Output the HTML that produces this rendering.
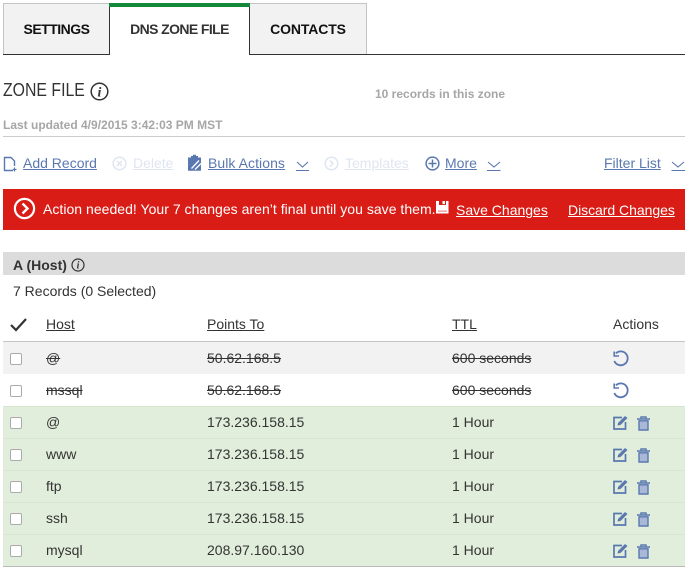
<!DOCTYPE html>
<html><head><meta charset="utf-8"><style>
html,body{margin:0;padding:0;background:#fff}
body{width:689px;height:570px;position:relative;overflow:hidden;font-family:"Liberation Sans",sans-serif;font-size:14px;color:#333}
.a{position:absolute;white-space:nowrap;line-height:16px}
.b{position:absolute}
.l{color:#5a78b0;text-decoration:underline}
.d{color:#dfe5f1;text-decoration:underline}
.tab{position:absolute;top:3px;height:50px;background:#f2f2f2;border:1px solid #c4c4c4;border-bottom:none;box-sizing:content-box;text-align:center;font-weight:bold;color:#111;line-height:50px;font-size:14px}
.w{color:#fff;text-decoration:underline}
.s{text-decoration:line-through}
.cb{position:absolute;left:10px;width:10px;height:10px;border:1px solid #aaa;border-radius:2px;background:#fff}
svg{position:absolute;overflow:visible}
</style></head><body>
<div class="tab" style="left:3px;width:105px;letter-spacing:-.5px">SETTINGS</div>
<div class="tab" style="left:249px;width:116px;letter-spacing:-.12px">CONTACTS</div>
<div class="b" style="left:3px;top:54px;width:106px;height:1px;background:#333"></div>
<div class="b" style="left:249px;top:54px;width:436px;height:1px;background:#333"></div>
<div class="b" style="left:109px;top:3px;width:1px;height:52px;background:#333"></div>
<div class="b" style="left:249px;top:3px;width:1px;height:52px;background:#333"></div>
<div class="b" style="left:109px;top:3px;width:141px;height:4px;background:#14893c"></div>
<div class="a" style="left:109px;width:141px;text-align:center;top:21px;font-weight:bold;color:#333;letter-spacing:-.6px">DNS ZONE FILE</div>

<div class="a" style="left:3px;top:81px;font-size:18px;line-height:18px;color:#333;transform:scaleX(.88);transform-origin:0 0">ZONE FILE</div>
<svg style="left:90px;top:82px" width="19" height="19" viewBox="0 0 19 19"><circle cx="9.5" cy="9.5" r="8.3" fill="none" stroke="#333" stroke-width="1.5"/><text x="9.5" y="14.5" font-family="Liberation Serif" font-style="italic" font-weight="bold" font-size="14" fill="#333" text-anchor="middle">i</text></svg>
<div class="a" style="left:375px;top:86px;font-size:12px;font-weight:bold;color:#a6a6a6">10 records in this zone</div>
<div class="a" style="left:3px;top:117px;font-size:12px;font-weight:bold;color:#a6a6a6">Last updated 4/9/2015 3:42:03 PM MST</div>
<div class="b" style="left:3px;top:136px;width:682px;height:1px;background:#ccc"></div>

<svg style="left:3px;top:156px" width="15" height="16" viewBox="0 0 15 16"><path d="M10 14.5H1.5V1.5H8L11.5 5V10" fill="none" stroke="#5a78b0" stroke-width="1.4"/><path d="M11.5 11.5V15.5M9.7 13.5H13.5" stroke="#5a78b0" stroke-width="1.2"/></svg>
<div class="a l" style="left:23px;top:155px">Add Record</div>
<svg style="left:112px;top:156px" width="15" height="15" viewBox="0 0 15 15"><circle cx="7.5" cy="7.5" r="6.3" fill="none" stroke="#dfe5f1" stroke-width="1.5"/><path d="M5 5L10 10M10 5L5 10" stroke="#dfe5f1" stroke-width="1.5"/></svg>
<div class="a d" style="left:133px;top:155px">Delete</div>
<svg style="left:187px;top:154px" width="15" height="18" viewBox="0 0 15 18"><path d="M1 3.5H4V2H6V0.8H9V2H11V3.5H14V16.8H1Z" fill="#5a78b0"/><path d="M4.5 14.5L12 6.5M8 15.5L14 9.5" stroke="#fff" stroke-width="1.3"/></svg>
<div class="a l" style="left:208px;top:155px;letter-spacing:.06px">Bulk Actions</div>
<svg style="left:295px;top:160px" width="15" height="12" viewBox="0 0 15 12"><path d="M2 2L7.5 7L13 2" fill="none" stroke="#5a78b0" stroke-width="1.1"/><path d="M1 10.5H14" stroke="#5a78b0" stroke-width="1"/></svg>
<svg style="left:324px;top:156px" width="15" height="15" viewBox="0 0 15 15"><circle cx="7.5" cy="7.5" r="6.3" fill="none" stroke="#dfe5f1" stroke-width="1.5"/><path d="M6 4.5L9 7.5L6 10.5" fill="none" stroke="#dfe5f1" stroke-width="1.5"/></svg>
<div class="a d" style="left:345px;top:155px">Templates</div>
<svg style="left:425px;top:156px" width="15" height="15" viewBox="0 0 15 15"><circle cx="7.5" cy="7.5" r="6.4" fill="none" stroke="#5a78b0" stroke-width="1.5"/><path d="M7.5 3.5V11.5M3.5 7.5H11.5" stroke="#5a78b0" stroke-width="1.5"/></svg>
<div class="a l" style="left:445px;top:155px">More</div>
<svg style="left:487px;top:160px" width="15" height="12" viewBox="0 0 15 12"><path d="M1 2L7 7L13 2" fill="none" stroke="#5a78b0" stroke-width="1.1"/><path d="M0 10.5H13.5" stroke="#5a78b0" stroke-width="1"/></svg>
<div class="a l" style="left:604px;top:155px">Filter List</div>
<svg style="left:671px;top:160px" width="15" height="12" viewBox="0 0 15 12"><path d="M1 2L7 7L13 2" fill="none" stroke="#5a78b0" stroke-width="1.1"/><path d="M0.5 10.5H14" stroke="#5a78b0" stroke-width="1"/></svg>

<div class="b" style="left:3px;top:189px;width:682px;height:41px;background:#d91c16"></div>
<svg style="left:13px;top:197px" width="23" height="23" viewBox="0 0 23 23"><circle cx="11.5" cy="11.5" r="9.6" fill="none" stroke="#fff" stroke-width="2.2"/><path d="M9.5 6.5L14.5 11.5L9.5 16.5" fill="none" stroke="#fff" stroke-width="2.4"/></svg>
<div class="a" style="left:43px;top:201px;color:#fff;letter-spacing:.03px">Action needed! Your 7 changes aren’t final until you save them.</div>
<svg style="left:436px;top:201px" width="13" height="13" viewBox="0 0 13 13"><path d="M0 0H12.5V12.5H0Z" fill="#fff"/><path d="M3 0H10V4H3Z" fill="#d91c16"/><path d="M6.5 0H9V3.2H6.5Z" fill="#fff"/><path d="M2 9.5H11V10.7H2Z" fill="#e88"/></svg>
<div class="a w" style="left:456px;top:202px">Save Changes</div>
<div class="a w" style="left:568px;top:202px;letter-spacing:-.04px">Discard Changes</div>

<div class="b" style="left:3px;top:252px;width:682px;height:23px;background:#dcdcdc"></div>
<div class="a" style="left:13px;top:257px;font-weight:bold;color:#333">A (Host)</div>
<svg style="left:71px;top:258px" width="14" height="14" viewBox="0 0 14 14"><circle cx="7" cy="7" r="6" fill="none" stroke="#333" stroke-width="1.2"/><text x="7" y="10.5" font-family="Liberation Serif" font-style="italic" font-weight="bold" font-size="10" fill="#333" text-anchor="middle">i</text></svg>
<div class="a" style="left:13px;top:283px;">7 Records (0 Selected)</div>

<svg style="left:10px;top:318px" width="17" height="14" viewBox="0 0 17 14"><path d="M1 7L6 12L16 1" fill="none" stroke="#333" stroke-width="2.2"/></svg>
<div class="a" style="left:46px;top:316px;text-decoration:underline">Host</div>
<div class="a" style="left:207px;top:316px;text-decoration:underline">Points To</div>
<div class="a" style="left:452px;top:316px;text-decoration:underline">TTL</div>
<div class="a" style="left:613px;top:316px">Actions</div>
<div class="b" style="left:3px;top:341px;width:682px;height:1px;background:#c4c4c4"></div>

<div class="b" style="left:3px;top:342px;width:682px;height:32px;background:#f2f2f2"></div>
<div class="b" style="left:3px;top:406px;width:682px;height:160px;background:#e2eedc"></div>
<div class="b" style="left:3px;top:406px;width:682px;height:1px;background:#d6e6cf"></div>
<div class="b" style="left:3px;top:438px;width:682px;height:1px;background:#d6e6cf"></div>
<div class="b" style="left:3px;top:470px;width:682px;height:1px;background:#d6e6cf"></div>
<div class="b" style="left:3px;top:502px;width:682px;height:1px;background:#d6e6cf"></div>
<div class="b" style="left:3px;top:534px;width:682px;height:1px;background:#d6e6cf"></div>
<div class="b" style="left:3px;top:566px;width:682px;height:1px;background:#bbb"></div>

<div class="cb" style="top:353px"></div><div class="a s" style="left:46px;top:350px">@</div><div class="a s" style="left:207px;top:350px">50.62.168.5</div><div class="a s" style="left:452px;top:350px">600 seconds</div>
<div class="cb" style="top:385px"></div><div class="a s" style="left:46px;top:382px">mssql</div><div class="a s" style="left:207px;top:382px">50.62.168.5</div><div class="a s" style="left:452px;top:382px">600 seconds</div>
<div class="cb" style="top:417px"></div><div class="a" style="left:46px;top:414px">@</div><div class="a" style="left:207px;top:414px">173.236.158.15</div><div class="a" style="left:452px;top:414px">1 Hour</div>
<div class="cb" style="top:449px"></div><div class="a" style="left:46px;top:446px">www</div><div class="a" style="left:207px;top:446px">173.236.158.15</div><div class="a" style="left:452px;top:446px">1 Hour</div>
<div class="cb" style="top:481px"></div><div class="a" style="left:46px;top:478px">ftp</div><div class="a" style="left:207px;top:478px">173.236.158.15</div><div class="a" style="left:452px;top:478px">1 Hour</div>
<div class="cb" style="top:513px"></div><div class="a" style="left:46px;top:510px">ssh</div><div class="a" style="left:207px;top:510px">173.236.158.15</div><div class="a" style="left:452px;top:510px">1 Hour</div>
<div class="cb" style="top:545px"></div><div class="a" style="left:46px;top:542px">mysql</div><div class="a" style="left:207px;top:542px">208.97.160.130</div><div class="a" style="left:452px;top:542px">1 Hour</div>

<svg width="0" height="0" style="position:absolute"><defs>
<g id="u"><path d="M3.8 3.4A6.95 6.95 0 1 1 2.3 11" fill="none" stroke="#5a78b0" stroke-width="1.8"/><path d="M2.2 1.5V6H7" fill="none" stroke="#5a78b0" stroke-width="1.6"/></g>
<g id="e"><path d="M9 2.5H1V14H12.5V7" fill="none" stroke="#5a78b0" stroke-width="1.7"/><path d="M4.5 10.5L5 8L12 1L14.5 3L7.5 10Z" fill="#5a78b0"/></g>
<g id="t"><path d="M0 3H13M4 3V1H9V3" fill="none" stroke="#5a78b0" stroke-width="1.4"/><path d="M2 4.8H11V14H2Z" fill="#a8b8d6" stroke="#5a78b0" stroke-width="1.4"/></g>
</defs></svg>
<svg style="left:612px;top:350px" width="17" height="17" viewBox="0 0 17 17"><use href="#u"/></svg>
<svg style="left:612px;top:382px" width="17" height="17" viewBox="0 0 17 17"><use href="#u"/></svg>
<svg style="left:613px;top:415px" width="16" height="15" viewBox="0 0 16 15"><use href="#e"/></svg><svg style="left:637px;top:416px" width="13" height="15" viewBox="0 0 13 15"><use href="#t"/></svg>
<svg style="left:613px;top:447px" width="16" height="15" viewBox="0 0 16 15"><use href="#e"/></svg><svg style="left:637px;top:448px" width="13" height="15" viewBox="0 0 13 15"><use href="#t"/></svg>
<svg style="left:613px;top:479px" width="16" height="15" viewBox="0 0 16 15"><use href="#e"/></svg><svg style="left:637px;top:480px" width="13" height="15" viewBox="0 0 13 15"><use href="#t"/></svg>
<svg style="left:613px;top:511px" width="16" height="15" viewBox="0 0 16 15"><use href="#e"/></svg><svg style="left:637px;top:512px" width="13" height="15" viewBox="0 0 13 15"><use href="#t"/></svg>
<svg style="left:613px;top:543px" width="16" height="15" viewBox="0 0 16 15"><use href="#e"/></svg><svg style="left:637px;top:544px" width="13" height="15" viewBox="0 0 13 15"><use href="#t"/></svg>
</body></html>
